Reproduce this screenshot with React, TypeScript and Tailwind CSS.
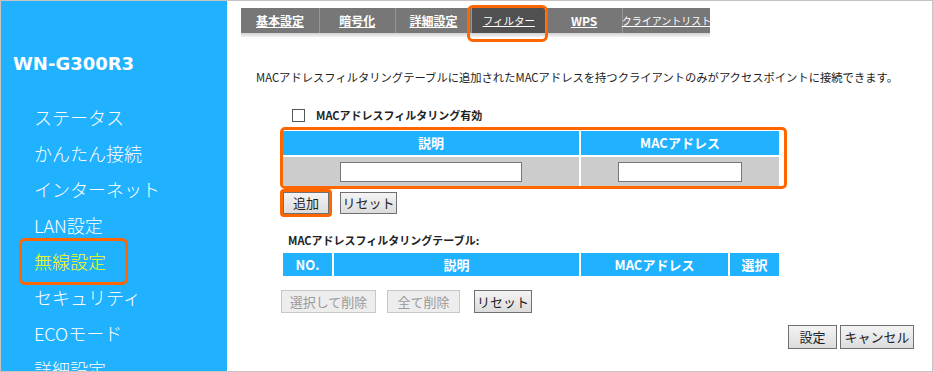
import React from 'react';

const JP = { fontFamily: '"MS UI Gothic", "Noto Sans CJK JP", "Noto Sans", sans-serif' };

const MENU = ['ステータス', 'かんたん接続', 'インターネット', 'LAN設定', '無線設定', 'セキュリティ', 'ECOモード', '詳細設定'];

const TABS = [
  { label: '基本設定', w: 'w-[78px]', size: 'text-[12px] font-bold' },
  { label: '暗号化', w: 'w-[76px]', size: 'text-[12px] font-bold' },
  { label: '詳細設定', w: 'w-[77px]', size: 'text-[12px] font-bold' },
  { label: 'フィルター', w: 'w-[74px]', size: 'text-[10.5px]', active: true },
  { label: 'WPS', w: 'w-[77px]', size: 'text-[12px] font-bold' },
  { label: 'クライアントリスト', w: 'w-[88px]', size: 'text-[10px]' },
];

const Btn: React.FC<{ w: string; h?: string; disabled?: boolean; children: React.ReactNode }> = ({ w, h = 'h-[22px]', disabled, children }) => (
  <div
    className={`${w} ${h} flex items-center justify-center text-[13px] border whitespace-nowrap ${
      disabled
        ? 'border-[#c8c8c8] bg-[#ededed] text-[#9a9a9a]'
        : 'border-[#707070] bg-gradient-to-b from-[#f4f4f4] to-[#dcdcdc] text-[#222]'
    }`}
  >
    {children}
  </div>
);

const Sidebar = () => (
  <div className="w-[226px] shrink-0 bg-[#20b2ff] text-white pt-[50px]">
    <div className="h-[24px] flex items-center pl-[12px] text-[18px] font-bold" style={{ fontFamily: '"DejaVu Sans", Verdana, sans-serif' }}>
      WN-G300R3
    </div>
    <div className="mt-[24px]" style={JP}>
      {MENU.map(m => (
        <div key={m} className="relative h-[36px] flex items-center pl-[33px] text-[18px] font-light">
          <span className={m === '無線設定' ? 'text-[#ffff00]' : ''}>{m}</span>
          {m === '無線設定' && (
            <div className="absolute left-[18px] top-[-5px] w-[109px] h-[47px] border-[3px] border-[#ff6600] rounded-[6px]" />
          )}
        </div>
      ))}
    </div>
  </div>
);

const Tabs = () => (
  <div className="ml-[14px] mt-[7px] w-[469px]">
    <div className="flex h-[25px] bg-[#777777]">
      {TABS.map((t, i) => (
        <div
          key={t.label}
          className={`${t.w} relative flex items-center justify-center whitespace-nowrap ${i > 0 ? 'border-l border-[#959595]' : ''} ${t.active ? 'bg-[#505050]' : ''}`}
        >
          <span className={`text-white underline ${t.size}`}>{t.label}</span>
          {t.active && (
            <div className="absolute left-[-5px] right-[-3px] top-[-3px] bottom-[-9px] border-[3px] border-[#ff6600] rounded-[6px]" />
          )}
        </div>
      ))}
    </div>
    <div className="h-[4px] bg-gradient-to-b from-[#d2d2d2] to-[#f2f2f2]" />
  </div>
);

const Main = () => (
  <div className="flex-1 flex flex-col text-[#222]" style={JP}>
    <Tabs />
    <div className="ml-[29px] mt-[32px] h-[16px] flex items-center text-[11.3px] whitespace-nowrap">
      MACアドレスフィルタリングテーブルに追加されたMACアドレスを持つクライアントのみがアクセスポイントに接続できます。
    </div>
    <div className="ml-[65px] mt-[22px] h-[16px] flex items-center gap-[11px]">
      <div className="w-[13px] h-[13px] border border-[#555] bg-white" />
      <span className="text-[11px] font-bold">MACアドレスフィルタリング有効</span>
    </div>
    <div className="ml-[53px] mt-[4px] w-[507px] border-[3px] border-[#ff6600] rounded-[5px] pt-[1px] pr-[5px]">
      <div className="grid grid-cols-[296px_198px] gap-[2px]">
        <div className="h-[24px] bg-[#20b2ff] text-white font-bold text-[13px] flex items-center justify-center">説明</div>
        <div className="h-[24px] bg-[#20b2ff] text-white font-bold text-[13px] flex items-center justify-center">MACアドレス</div>
        <div className="h-[29px] bg-[#cccccc] flex items-center pl-[57px]">
          <div className="w-[182px] h-[20px] bg-white border border-[#777]" />
        </div>
        <div className="h-[29px] bg-[#cccccc] flex items-center pl-[37px]">
          <div className="w-[124px] h-[20px] bg-white border border-[#777]" />
        </div>
      </div>
    </div>
    <div className="ml-[53px] flex items-center gap-[8px]">
      <div className="border-[3px] border-[#ff6600] rounded-[4px]">
        <Btn w="w-[46px]">追加</Btn>
      </div>
      <Btn w="w-[57px]">リセット</Btn>
    </div>
    <div className="ml-[61px] mt-[15px] h-[16px] flex items-center text-[11px] font-bold">
      MACアドレスフィルタリングテーブル:
    </div>
    <div className="ml-[56px] mt-[5px] grid grid-cols-[49px_245px_147px_49px] gap-[2px] w-[496px]">
      {['NO.', '説明', 'MACアドレス', '選択'].map(h => (
        <div key={h} className="h-[23px] bg-[#20b2ff] text-white font-bold text-[13px] flex items-center justify-center">{h}</div>
      ))}
    </div>
    <div className="ml-[54px] mt-[14px] flex items-center">
      <Btn w="w-[95px]" h="h-[23px]" disabled>選択して削除</Btn>
      <div className="ml-[11px]"><Btn w="w-[73px]" h="h-[23px]" disabled>全て削除</Btn></div>
      <div className="ml-[14px]"><Btn w="w-[58px]" h="h-[23px]">リセット</Btn></div>
    </div>
    <div className="mt-[12px] pr-[18px] flex justify-end gap-[3px]">
      <Btn w="w-[49px]" h="h-[24px]">設定</Btn>
      <Btn w="w-[74px]" h="h-[24px]">キャンセル</Btn>
    </div>
  </div>
);

export default function App() {
  return (
    <div className="w-[933px] h-[372px] border border-[#c8c2c2] flex overflow-hidden bg-white">
      <Sidebar />
      <Main />
    </div>
  );
}
